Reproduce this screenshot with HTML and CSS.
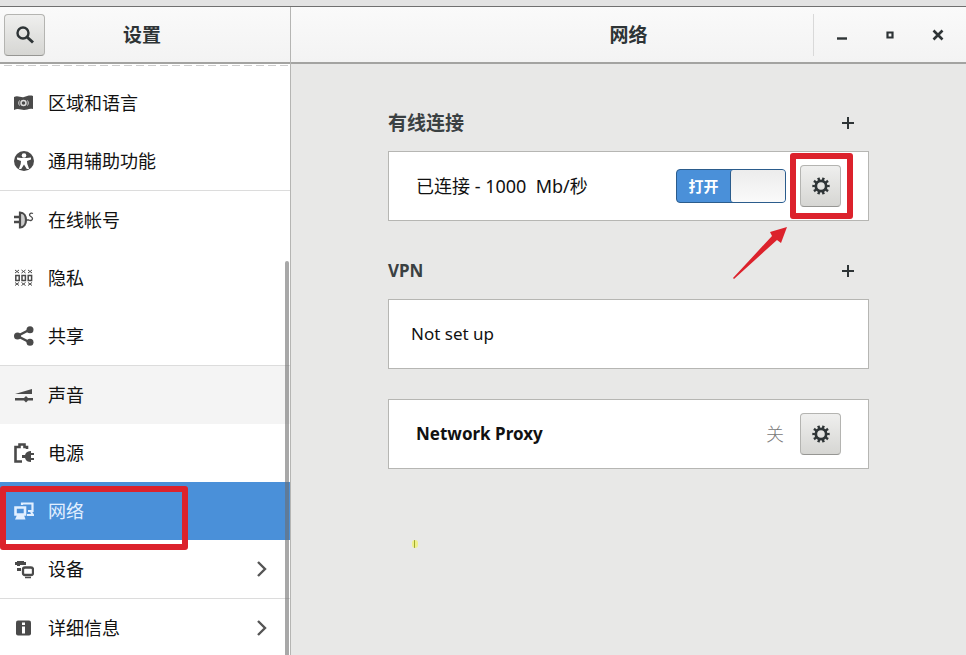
FILE: index.html
```html
<!DOCTYPE html>
<html lang="zh-CN">
<head>
  <meta charset="UTF-8">
  <meta name="viewport" content="width=device-width, initial-scale=1.0">
  <title>设置 - 网络</title>
  <link rel="stylesheet" href="styles.css">
</head>
<body>
  <svg class="defs" aria-hidden="true">
    <symbol id="gear" viewBox="0 0 18 18">
      <circle cx="9" cy="9" r="5.200" fill="none" stroke="currentColor" stroke-width="2.800"/>
      <circle cx="9" cy="9" r="7.200" fill="none" stroke="currentColor" stroke-width="3" pathLength="20" stroke-dasharray="1 1" stroke-dashoffset="0.5"/>
    </symbol>
    <symbol id="plus" viewBox="0 0 14 14">
      <path d="M7 1v12M1 7h12" stroke="currentColor" stroke-width="2"/>
    </symbol>
    <symbol id="chevron" viewBox="0 0 12 16">
      <path d="M2 1l7 7-7 7" fill="none" stroke="currentColor" stroke-width="2.4"/>
    </symbol>
  </svg>

  <div class="window">
    <aside class="sidebar">
      <header class="titlebar sidebar-title">
        <button class="btn" type="button" aria-label="搜索">
          <svg width="20" height="20" viewBox="0 0 20 20" fill="none" stroke="currentColor"><circle cx="8" cy="8" r="5.5" stroke-width="2.4"/><path d="M12 12l6 5.5" stroke-width="3"/></svg>
        </button>
        <h1>设置</h1>
      </header>

      <nav class="list">
        <ul>
          <li><a href="#region">
            <svg class="icon" viewBox="0 0 20 20"><path fill="currentColor" d="M0 4c4-2 7 1 10 0s6-2 9-1v13c-4-1-6 1-9 1s-6-2-10 0z"/><g fill="none" stroke="#ddd"><circle cx="9.500" cy="10" r="2.500" stroke-width="1.500"/><path d="M5.500 7.500c-1 1.500-1 3.500 0 5M13.500 7.500c1 1.500 1 3.500 0 5"/></g></svg>
            <span>区域和语言</span></a></li>
          <li><a href="#access">
            <svg class="icon" viewBox="0 0 20 20"><circle cx="10" cy="10" r="10" fill="currentColor"/><circle cx="10" cy="4.500" r="2.300" fill="#fff"/><path fill="#fff" d="M3 6.500l4.500.5h5l4.500-.5v2l-4 1.500.3 3 1.900 5h-2.400L10 13.500 7.200 18H4.800l1.900-5 .3-3-4-1.500z"/></svg>
            <span>通用辅助功能</span></a></li>
        </ul>
        <ul>
          <li><a href="#accounts">
            <svg class="icon" viewBox="0 0 20 20"><path d="M0 7h5M0 12h5" stroke="currentColor" stroke-width="2.400"/><path d="M6 2.500c8 0 8 15 0 15z" fill="#ccc" stroke="currentColor" stroke-width="2.200"/><path d="M12 10h3M19 3.500c-2-1-3.500 0-3.500 1.500s3 1.500 3 3.500-2 2.500-3.500 1.500" fill="none" stroke="currentColor" stroke-width="1.300"/></svg>
            <span>在线帐号</span></a></li>
          <li><a href="#privacy">
            <svg class="icon" viewBox="0 0 20 20" fill="none" stroke="currentColor"><path d="M1 2l4 3M5 2L1 5M7.500 2l4 3M11.500 2l-4 3M14 2l4 3M18 2l-4 3M1 14.500l4 3M5 14.500l-4 3M7.500 14.500l4 3M11.500 14.500l-4 3M14 14.500l4 3M18 14.500l-4 3"/><path d="M1.800 7.500h3.400v5H1.800zM8 7.500h3.400v5H8zM14.200 7.500h3.400v5h-3.400z" stroke-width="1.500"/></svg>
            <span>隐私</span></a></li>
          <li><a href="#sharing">
            <svg class="icon" viewBox="0 0 20 20"><path d="M16 3.500L3.500 10 16 16.500" fill="none" stroke="currentColor" stroke-width="2.500"/><g fill="currentColor"><circle cx="3.500" cy="10" r="3.500"/><circle cx="16" cy="3.800" r="3.500"/><circle cx="16" cy="16.200" r="3.500"/></g></svg>
            <span>共享</span></a></li>
        </ul>
        <ul>
          <li class="hover"><a href="#sound">
            <svg class="icon" viewBox="0 0 20 20" fill="currentColor"><path d="M1 9L18 4v5zM1 13h9l2-2 2 2h5v2.400h-5l-2 2-2-2H1z"/></svg>
            <span>声音</span></a></li>
          <li><a href="#power">
            <svg class="icon" viewBox="0 0 20 20"><path d="M13 6V4h-2.500V1.500h-5V4H1.500v14.500H8" fill="none" stroke="currentColor" stroke-width="2.600"/><path fill="currentColor" d="M8 12h3c1-3 3-4 6-4v2h3v2h-3v3h3v2h-3v2c-3 0-5-1-6-4H8z"/></svg>
            <span>电源</span></a></li>
          <li class="active"><a href="#network" aria-current="page">
            <svg class="icon" viewBox="0 0 20 20"><path d="M8 4V2.500h10.500V10H14M13 14h6l-2-3" fill="none" stroke="currentColor" stroke-width="2.200"/><path d="M1.500 6.500h9.500v7H1.500z" fill="none" stroke="currentColor" stroke-width="2.600"/><path d="M3 14h7l1.500 4.500H1z" fill="currentColor"/></svg>
            <span>网络</span></a>
            <div class="mark mark-row"></div></li>
          <li><a href="#devices">
            <svg class="icon" viewBox="0 0 20 20"><path fill="currentColor" d="M3 2h7v1h2v3H6v1H3V6H1V3h2zM3 9h4v3H3z"/><rect x="9" y="8.500" width="10" height="7.500" rx="2" fill="none" stroke="currentColor" stroke-width="2.300"/><path d="M11 18.500h6" stroke="currentColor" stroke-width="1.500"/></svg>
            <span>设备</span><svg class="chevron"><use href="#chevron"/></svg></a></li>
        </ul>
        <ul>
          <li><a href="#details">
            <svg class="icon" viewBox="0 0 20 20"><rect x="2" y="2.500" width="15" height="15" rx="2" fill="currentColor"/><path fill="#fff" d="M8 4.500h3v2.500H8zM8 8.500h3v7H8z"/></svg>
            <span>详细信息</span><svg class="chevron"><use href="#chevron"/></svg></a></li>
        </ul>
      </nav>
      <div class="scrollbar"></div>
    </aside>

    <main class="main">
      <header class="titlebar">
        <h1>网络</h1>
        <div class="controls">
          <button type="button" aria-label="最小化"><svg width="14" height="14" viewBox="0 0 14 14"><path d="M2 10.500h10" stroke="currentColor" stroke-width="2.400"/></svg></button>
          <button type="button" aria-label="最大化"><svg width="14" height="14" viewBox="0 0 14 14"><path d="M4.500 4.500h5v5h-5z" fill="none" stroke="currentColor" stroke-width="2.200"/></svg></button>
          <button type="button" aria-label="关闭"><svg width="14" height="14" viewBox="0 0 14 14"><path d="M2.500 2.500l9 9M11.500 2.500l-9 9" stroke="currentColor" stroke-width="2.600"/></svg></button>
        </div>
      </header>

      <div class="content">
        <section>
          <div class="heading">
            <h2>有线连接</h2>
            <button class="add" type="button" aria-label="添加有线连接"><svg><use href="#plus"/></svg></button>
          </div>
          <div class="card">
            <span class="name speed">已连接 - 1000&nbsp; Mb/秒</span>
            <label class="switch">
              <input type="checkbox" checked>
              <span class="on">打开</span>
              <span class="knob"></span>
            </label>
            <div class="marked">
              <button class="btn" type="button" aria-label="有线设置"><svg class="gear"><use href="#gear"/></svg></button>
              <div class="mark mark-gear"></div>
              <svg class="arrow" viewBox="0 0 56 54"><path fill="#dc222c" d="M55 1L49 17l-4-3L2 53l-1-1L40 10l-2-4z"/></svg>
            </div>
          </div>
        </section>

        <section>
          <div class="heading">
            <h2 lang="en">VPN</h2>
            <button class="add" type="button" aria-label="添加 VPN"><svg><use href="#plus"/></svg></button>
          </div>
          <div class="card empty">Not set up</div>
        </section>

        <section class="card">
          <strong class="name">Network Proxy</strong>
          <span class="state">关</span>
          <button class="btn" type="button" aria-label="代理设置"><svg class="gear"><use href="#gear"/></svg></button>
        </section>
        <div class="pointer"></div>
      </div>
    </main>
  </div>
</body>
</html>
```
FILE: styles.css
```css
* {
  box-sizing: border-box;
}

body {
  margin: 0;
  height: 100vh;
  overflow: hidden;
  background: #e3e3e3;
  padding-top: 6px;
  font-family: "Noto Sans", "Noto Sans CJK SC", sans-serif;
  font-size: 17px;
  line-height: 24px;
  color: #111;
}

.defs {
  position: absolute;
  width: 0;
  height: 0;
}

h1, h2 {
  margin: 0;
  font-size: 19px;
  font-weight: bold;
  color: #2e3436;
}

h2 {
  color: #3a4042;
}

h2:lang(en) {
  font-size: 17px;
}

button {
  padding: 0;
  border: none;
  background: none;
  color: #2e3436;
  display: flex;
  align-items: center;
  justify-content: center;
}

ul {
  list-style: none;
  margin: 0;
  padding: 0;
}

.window {
  display: flex;
  height: 100%;
  border-top: 1px solid #707070;
}

/* title bars */
.titlebar {
  display: grid;
  grid-template-columns: 1fr auto 1fr;
  align-items: center;
  height: 57px;
  background: linear-gradient(#fafafa, #f3f3f3);
  border-bottom: 2px solid #a3a3a1;
}

.titlebar h1 {
  grid-column: 2;
}

.sidebar-title {
  padding: 0 10px 0 4px;
}

.btn {
  width: 41px;
  height: 42px;
  border: 1px solid #b4b4b1;
  border-bottom-color: #969693;
  border-radius: 4px;
  background: linear-gradient(#efefee, #d6d6d3);
}

.controls {
  display: flex;
  justify-self: end;
  margin-right: 4px;
  padding-left: 4px;
  border-left: 1px solid #d9d9d9;
}

.controls button {
  width: 48px;
  height: 42px;
}

/* sidebar */
.sidebar {
  position: relative;
  flex: none;
  width: 291px;
  border-right: 1px solid #b5b5b3;
  background: #fff;
  overflow: hidden;
}

.list {
  padding-top: 10px;
  background: repeating-linear-gradient(90deg, #fff 0 4px, #ccc 4px 12px) 0 1px / 100% 1px no-repeat;
}

.list ul + ul {
  border-top: 1px solid #dcdcdc;
}

.list li {
  position: relative;
}

.list a {
  display: flex;
  align-items: center;
  gap: 14px;
  height: 58px;
  padding: 0 22px 0 14px;
  font-size: 18px;
  color: #111;
  text-decoration: none;
}

.icon {
  flex: none;
  width: 20px;
  height: 20px;
  color: #4a4a4a;
}

.chevron {
  width: 12px;
  height: 16px;
  margin-left: auto;
  color: #555;
}

.list .hover {
  background: #f4f4f4;
}

.list .active {
  background: #4a90d9;
}

.active a, .active .icon {
  color: #e2efff;
}

.scrollbar {
  position: absolute;
  top: 254px;
  right: 1px;
  bottom: 0;
  width: 4px;
  border-radius: 2px 2px 0 0;
  background: rgba(110, 110, 110, 0.6);
}

/* network panel */
.main {
  flex: 1;
  background: #e8e8e7;
}

.content {
  max-width: 481px;
  margin: 0 auto;
  padding-top: 43px;
}

.heading {
  display: flex;
  align-items: center;
  justify-content: space-between;
  height: 32px;
  margin-bottom: 12px;
}

.add {
  width: 42px;
  height: 32px;
}

.add svg {
  width: 14px;
  height: 14px;
}

.card {
  display: flex;
  align-items: center;
  height: 70px;
  padding: 0 27px;
  border: 1px solid #b6b6b3;
  background: #fff;
}

section + section {
  margin-top: 34px;
}

section + .card {
  margin-top: 30px;
}

.empty {
  padding-left: 22px;
}

.name {
  flex: 1;
}

.speed {
  font-size: 18px;
}

.state {
  margin-right: 16px;
  font-size: 18px;
  font-weight: 300;
  color: #777;
}

.gear {
  width: 18px;
  height: 18px;
}

.switch {
  position: relative;
  display: flex;
  width: 110px;
  height: 34px;
  margin-right: 14px;
  border: 1px solid #2b5c8c;
  border-radius: 4px;
  background: #4a90d9;
}

.switch input {
  position: absolute;
  inset: 0;
  width: 100%;
  height: 100%;
  margin: 0;
  opacity: 0;
}

.switch .on {
  flex: 1;
  font-size: 15px;
  line-height: 32px;
  font-weight: bold;
  text-align: center;
  color: #fff;
}

.switch .knob {
  width: 55px;
  border-left: 1px solid #2b5c8c;
  border-radius: 3px;
  background: linear-gradient(#ececec, #fafafa);
}

/* red annotations */
.mark {
  position: absolute;
  border: 6px solid #dc222c;
  border-radius: 3px;
  pointer-events: none;
}

.mark-row {
  top: 4px;
  left: 0;
  width: 188px;
  height: 64px;
  z-index: 1;
}

.marked {
  position: relative;
}

.mark-gear {
  inset: -12px -12px -12px -10px;
}

.arrow {
  position: absolute;
  top: 61px;
  right: 53px;
  width: 56px;
  height: 54px;
}

.pointer {
  width: 6px;
  height: 8px;
  margin: 71px 0 0 24px;
  border-radius: 3px;
  background: linear-gradient(90deg, #eef08c 2px, #a0a830 2px 3px, #eef08c 3px);
}
```
